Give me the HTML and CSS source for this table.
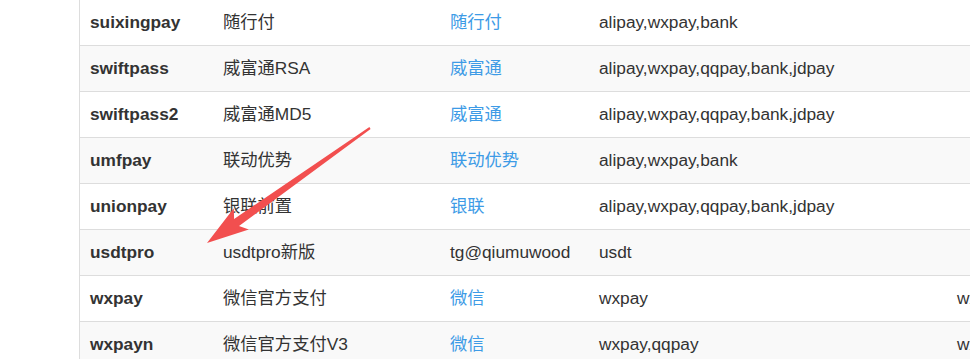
FILE: index.html
```html
<!DOCTYPE html>
<html lang="zh">
<head>
<meta charset="utf-8">
<title>支付插件列表</title>
<link rel="stylesheet" href="styles.css">
</head>
<body>
<div class="page">
  <div class="panel">
    <table class="plugins">
      <colgroup>
        <col class="c-name"><col class="c-title"><col class="c-author"><col class="c-types"><col class="c-extra">
      </colgroup>
      <tbody>
        <tr><td class="name">suixingpay</td><td>随行付</td><td><a class="link" href="#">随行付</a></td><td>alipay,wxpay,bank</td><td></td></tr>
        <tr class="alt"><td class="name">swiftpass</td><td>威富通RSA</td><td><a class="link" href="#">威富通</a></td><td>alipay,wxpay,qqpay,bank,jdpay</td><td></td></tr>
        <tr><td class="name">swiftpass2</td><td>威富通MD5</td><td><a class="link" href="#">威富通</a></td><td>alipay,wxpay,qqpay,bank,jdpay</td><td></td></tr>
        <tr class="alt"><td class="name">umfpay</td><td>联动优势</td><td><a class="link" href="#">联动优势</a></td><td>alipay,wxpay,bank</td><td></td></tr>
        <tr><td class="name">unionpay</td><td>银联前置</td><td><a class="link" href="#">银联</a></td><td>alipay,wxpay,qqpay,bank,jdpay</td><td></td></tr>
        <tr class="alt"><td class="name">usdtpro</td><td>usdtpro新版</td><td>tg@qiumuwood</td><td>usdt</td><td></td></tr>
        <tr><td class="name">wxpay</td><td>微信官方支付</td><td><a class="link" href="#">微信</a></td><td>wxpay</td><td>wxpay</td></tr>
        <tr class="alt"><td class="name">wxpayn</td><td>微信官方支付V3</td><td><a class="link" href="#">微信</a></td><td>wxpay,qqpay</td><td>wxpay</td></tr>
      </tbody>
    </table>
  </div>
  <svg class="arrow" width="970" height="359" viewBox="0 0 970 359" aria-hidden="true">
    <polygon points="369.4,127.1 234.1,219.0 233.8,208.2 207,243 248.8,229.4 239.0,226.0 370.6,128.9" fill="#f24f4f"/>
  </svg>
</div>
</body>
</html>
```

FILE: styles.css
```css
html, body {
  margin: 0;
  padding: 0;
  background: #ffffff;
  overflow: hidden;
}

.page {
  position: relative;
  width: 970px;
  height: 359px;
  overflow: hidden;
}

.panel {
  margin-left: 79px;
  border-left: 1px solid #dddddd;
  height: 359px;
  width: 1100px;
}

.plugins {
  border-collapse: collapse;
  table-layout: fixed;
  width: 1100px;
  font-family: "Liberation Sans", "Noto Sans CJK SC", sans-serif;
  font-size: 17.3px;
  color: #333333;
}

.c-name { width: 133px; }
.c-title { width: 227px; }
.c-author { width: 149px; }
.c-types { width: 358px; }
.c-extra { width: 233px; }

.plugins td {
  padding: 10px 10px 10px;
  line-height: 25px;
  border-top: 1px solid #dddddd;
  white-space: nowrap;
  vertical-align: middle;
}

.plugins tr:first-child td {
  border-top: none;
}

.plugins tr.alt td {
  background: #f9f9f9;
}

.plugins td.name {
  font-weight: bold;
}

.link {
  color: #3d9be6;
  text-decoration: none;
}

.arrow {
  position: absolute;
  left: 0;
  top: 0;
  pointer-events: none;
}
```
